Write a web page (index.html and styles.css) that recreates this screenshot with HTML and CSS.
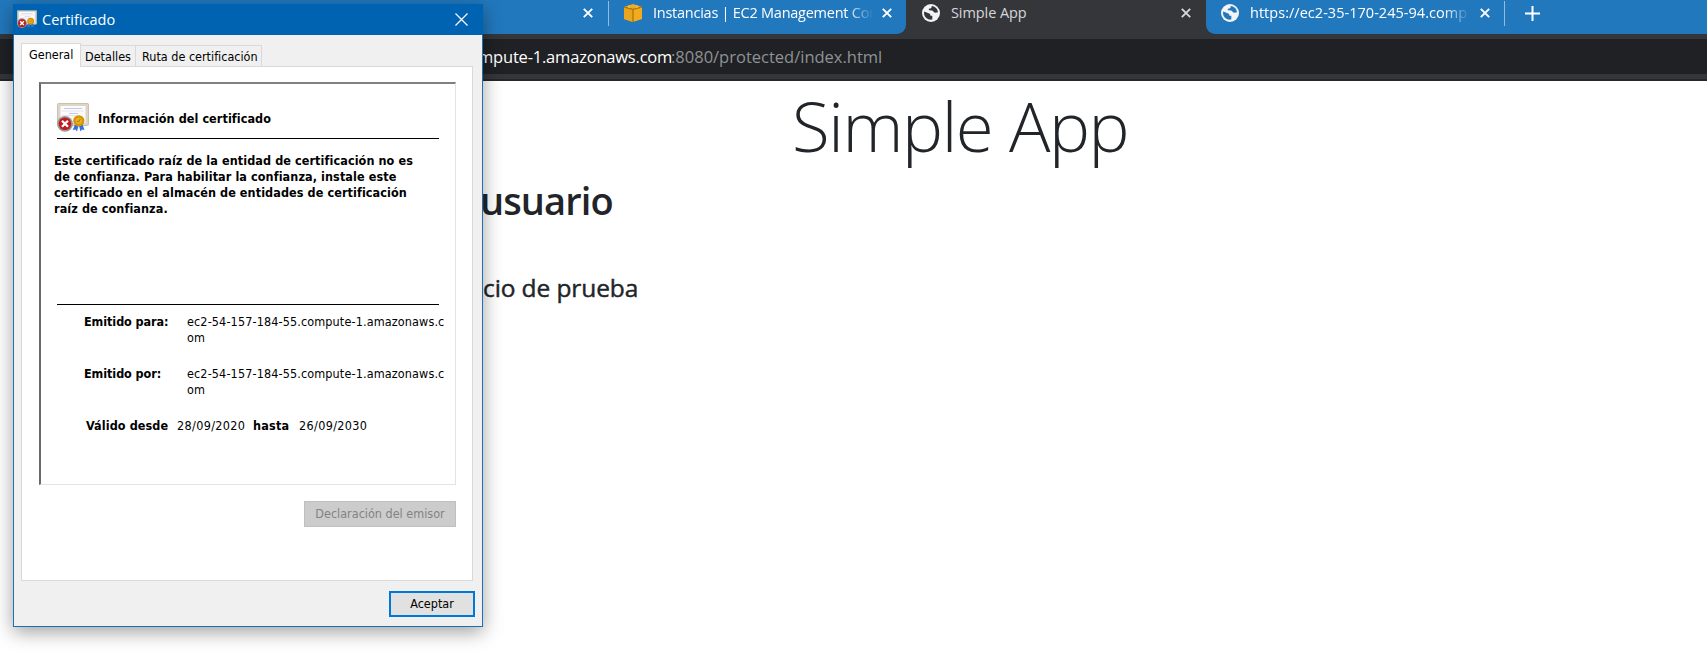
FILE: index.html
```html
<!DOCTYPE html>
<html lang="es">
<head>
<meta charset="utf-8">
<title>Simple App</title>
<link rel="stylesheet" href="styles.css">
</head>
<body>
<svg class="defs" width="0" height="0">
  <defs>
    <symbol id="globe" viewBox="0 0 18 18">
      <circle cx="9" cy="9" r="9" fill="#f1f3f4"/>
      <path class="land" d="M2.2 7.6 6.6 9.3c1 .4 1.8.9 1.8 1.8v.6h1.9v3.9C6 16.500 2 13.200 2 9zM9.600 1.900C9.900 3.700 9 4.400 7.600 4.500 6.600 4.600 6.500 6 7.500 6.300l2.500.3c1.600.3 1.500 2.100 3 2.200l3-.5C15.800 4.800 13 2 9.600 1.900z" fill="var(--land)"/>
    </symbol>
    <symbol id="cross" viewBox="0 0 10 10">
      <path d="M.8.8l8.400 8.400M9.200.8L.8 9.200" stroke="currentColor" stroke-width="1.900" fill="none"/>
    </symbol>
    <symbol id="cert" viewBox="0 0 32 29">
      <rect x=".5" y=".5" width="31" height="22" rx="1" fill="#ddd5c7" stroke="#c9c0b0"/>
      <rect x="3.500" y="3" width="25" height="17" fill="#fbfbfc"/>
      <path d="M7 5.500h18M12 10.500h9" stroke="#c3c8e6"/>
      <path d="M5 8h22M5 12.500h17" stroke="#e3e4ec"/>
      <path d="M18.500 20l-2.700 7 2.700-.6 1.500 2.200 2-7.600zM25 20l2.500 7-2.500-.6-1.500 2.200-2-7.600z" fill="#2f6fe0"/>
      <circle cx="21.800" cy="17.800" r="5.600" fill="#d39408"/>
      <circle cx="21.800" cy="17.800" r="3.200" fill="#e8b022"/>
      <path d="M20 18l1.500 1 2-3" stroke="#b87800" fill="none"/>
      <circle cx="8" cy="20.800" r="7.900" fill="#9a9a9a"/>
      <circle cx="8" cy="20.800" r="6.300" fill="#bd1c22"/>
      <path d="M5 17.800l6 6M11 17.800l-6 6" stroke="#fff" stroke-width="2.300"/>
    </symbol>
  </defs>
</svg>

<header class="browser">
  <div class="tabs">
    <div class="tab tab-first"><svg class="x"><use href="#cross"/></svg></div>
    <div class="tab tab-aws">
      <svg class="fav" viewBox="0 0 18 18">
        <path d="M0 3l9-3 9 3v12l-9 3-9-3z" fill="#f2ab1e"/>
        <path d="M0 3l9 2.200V18l-9-3z" fill="#eaa51f"/>
        <path d="M0 3l9 2.300L18 3M9 5.300V18" stroke="#a9780e" stroke-width="1.300" fill="none"/>
        <path d="M5 1.300V4M13 1.300V4" stroke="#f8cb62"/>
      </svg>
      <span class="label fade aws-label">Instancias | EC2 Management Con</span>
      <svg class="x"><use href="#cross"/></svg>
    </div>
    <div class="tab tab-active">
      <svg class="fav"><use href="#globe"/></svg>
      <span class="label app-label">Simple App</span>
      <svg class="x"><use href="#cross"/></svg>
    </div>
    <div class="tab tab-last">
      <svg class="fav"><use href="#globe"/></svg>
      <span class="label fade url-label">https://ec2-35-170-245-94.comp</span>
      <svg class="x"><use href="#cross"/></svg>
    </div>
    <div class="rest"><svg class="plus" viewBox="0 0 15 15"><path d="M7.500 0v15M0 7.500h15" stroke="#fff" stroke-width="2"/></svg></div>
  </div>
  <div class="omnibox"><span class="host">mpute-1.amazonaws.com</span><span class="path">:8080/protected/index.html</span></div>
</header>

<main class="page">
  <h1>Simple App</h1>
  <h2>usuario</h2>
  <h3>cio de prueba</h3>
</main>

<section class="dialog">
  <div class="titlebar">
    <svg class="title-icon" viewBox="0 0 32 30"><use href="#cert" width="32" height="29"/></svg>
    <span class="title">Certificado</span>
    <svg class="title-close" viewBox="0 0 13 13"><path d="M.5.5l12 12M12.500.5l-12 12" stroke="#fff" stroke-width="1.200"/></svg>
  </div>
  <div class="sheet-tabs">
    <span class="st st-on">General</span><span class="st st-det">Detalles</span><span class="st st-ruta">Ruta de certificación</span>
  </div>
  <div class="sheet">
    <div class="box">
      <div class="info">
        <svg class="info-icon"><use href="#cert"/></svg>
        <b class="info-title">Información del certificado</b>
      </div>
      <p class="warn"><span>Este certificado raíz de la entidad de certificación no es</span><br><span>de confianza. Para habilitar la confianza, instale este</span><br><span>certificado en el almacén de entidades de certificación</span><br><span>raíz de confianza.</span></p>
      <dl class="fields">
        <dt>Emitido para:</dt><dd>ec2-54-157-184-55.compute-1.amazonaws.c<br>om</dd>
        <dt>Emitido por:</dt><dd>ec2-54-157-184-55.compute-1.amazonaws.c<br>om</dd>
      </dl>
      <div class="valid"><b class="v1">Válido desde</b><span class="v2">28/09/2020</span><b class="v3">hasta</b><span class="v4">26/09/2030</span></div>
    </div>
    <button class="issuer" disabled>Declaración del emisor</button>
  </div>
  <button class="ok">Aceptar</button>
</section>
</body>
</html>
```

FILE: styles.css
```css
* { box-sizing: border-box; }
body { margin: 0; width: 1707px; height: 662px; overflow: hidden; background: #fff; color: #212529; font-family: "Open Sans", "Noto Sans", sans-serif; }
.defs { position: absolute; }
svg { display: block; flex: none; }

.browser { height: 81px; background: #35363a; border-bottom: 2px solid #29262b; }
.tabs { display: flex; height: 34px; }
.tab { --land: #2278bd; display: flex; align-items: flex-start; background: #2278bd; color: #fff; height: 34px; }
.fav { width: 18px; height: 18px; margin-top: 4px; }
.x { width: 10px; height: 10px; margin-top: 8px; margin-left: auto; }
.label { font-size: 14.500px; line-height: 20px; margin-top: 3px; white-space: nowrap; }
.fade { -webkit-mask-image: linear-gradient(90deg, #000 88%, transparent 100%); mask-image: linear-gradient(90deg, #000 88%, transparent 100%); }
.tab-first { width: 608px; padding-right: 15px; }
.tab-aws { width: 298px; padding: 0 14px; border-bottom-right-radius: 9px; }
.tab-aws::before { content: ""; width: 1px; height: 25px; margin: 1px 0 0 -14px; background: #91bcdf; }
.tab-aws .fav { margin-left: 15px; }
.aws-label { width: 220px; margin-left: 11px; letter-spacing: -.25px; }
.tab-active { --land: #35363a; width: 300px; padding: 0 15px 0 16px; background: #35363a; color: #d5d7da; }
.app-label { margin-left: 11px; letter-spacing: -.08px; }
.tab-last { width: 299px; padding: 0 15px; border-bottom-left-radius: 9px; }
.url-label { width: 220px; margin-left: 11px; letter-spacing: .03px; }
.rest { flex: 1; background: #2278bd; display: flex; }
.rest::before { content: ""; width: 1px; height: 25px; margin-top: 1px; margin-left: -1px; background: #91bcdf; }
.plus { width: 15px; height: 15px; margin: 6px 0 0 20px; }
.tab-active, .tab-active + .tab-last { background-clip: padding-box; }
.tabs { background: #35363a; }
.omnibox { height: 35px; margin-top: 5px; background: #202124; padding-left: 478px; display: flex; font-size: 16.500px; line-height: 35px; white-space: nowrap; }
.host { width: 193px; color: #fff; letter-spacing: -.2px; }
.path { color: #8f9296; }

.page { height: 581px; display: flow-root; }
h1 { margin: -3px 0 0; padding-left: 792px; font-weight: 300; font-size: 69px; line-height: 94px; letter-spacing: -1.400px; white-space: nowrap; }
h2 { margin: 3px 0 0; padding-left: 480px; font-weight: 600; font-size: 38px; line-height: 50px; letter-spacing: -.9px; }
h3 { margin: 47px 0 0; padding-left: 483px; font-weight: 400; font-size: 24.500px; line-height: 32px; letter-spacing: -.1px; -webkit-text-stroke: .45px #212529; }

.dialog { position: absolute; left: 13px; top: 4px; width: 470px; height: 623px; background: #f0f0f0; border: 1px solid #1a70b5; box-shadow: 0 5px 18px rgba(0,0,0,.38); font-family: "DejaVu Sans Condensed", "DejaVu Sans", sans-serif; font-stretch: condensed; font-size: 12.500px; line-height: 16px; color: #000; }
.titlebar { height: 31px; margin: -1px -1px 0; padding: 0 15px 0 4px; background: #0063b1; display: flex; align-items: center; color: #fff; font-family: "Open Sans", sans-serif; font-stretch: normal; font-size: 14.500px; }
.title-icon { width: 20px; height: 19px; }
.title { margin-left: 5px; }
.title-close { width: 13px; height: 13px; margin-left: auto; }
.sheet-tabs { display: flex; align-items: flex-end; margin: 8px 0 -1px 7px; height: 24px; position: relative; z-index: 1; }
.st { height: 22px; border: 1px solid #d9d9d9; border-left: 0; padding: 3px 0 0 4px; white-space: nowrap; }
.st-on { width: 60px; height: 24px; background: #fff; border-left: 1px solid #d9d9d9; border-bottom: 0; padding: 3px 0 0 7px; }
.st-det { width: 55px; }
.st-ruta { width: 126px; padding-left: 6px; }
.sheet { width: 452px; height: 515px; margin-left: 7px; background: #fff; border: 1px solid #d9d9d9; padding: 15px 16px 0 17px; }
.box { width: 417px; height: 403px; border: 2px solid #696969; border-top-color: #808080; border-right: 1px solid #e3e3e3; border-bottom: 1px solid #e3e3e3; }
.info { display: flex; height: 55px; margin: 0 16px; padding-top: 19px; border-bottom: 1px solid #000; }
.info-icon { width: 32px; height: 29px; }
.info-title { margin: 8px 0 0 9px; white-space: nowrap; letter-spacing: .07px; }
.warn { height: 166px; margin: 0 16px; padding: 14px 0 0; border-bottom: 1px solid #000; font-weight: 700; white-space: nowrap; letter-spacing: .09px; }
.warn span { margin-left: -3px; }
.fields { display: grid; grid-template-columns: 103px 1fr; row-gap: 20px; margin: 9px 0 0 43px; white-space: nowrap; }
dt { font-weight: 700; letter-spacing: -.07px; }
dd { margin: 0; letter-spacing: .13px; }
.valid { display: flex; margin: 20px 0 0 45px; white-space: nowrap; }
.v1 { width: 91px; letter-spacing: .1px; }
.v2 { width: 76px; letter-spacing: .35px; }
.v3 { width: 46px; letter-spacing: .2px; }
.v4 { letter-spacing: .35px; }
button { display: block; font: inherit; padding: 0; text-align: center; border-radius: 0; }
.issuer { width: 152px; height: 26px; margin: 16px 0 0 auto; background: #ccc; border: 1px solid #bfbfbf; color: #838383; }
.ok { width: 86px; height: 26px; margin: 10px 7px 0 auto; background: #e1e1e1; border: 2px solid #0078d7; color: #000; }
```
